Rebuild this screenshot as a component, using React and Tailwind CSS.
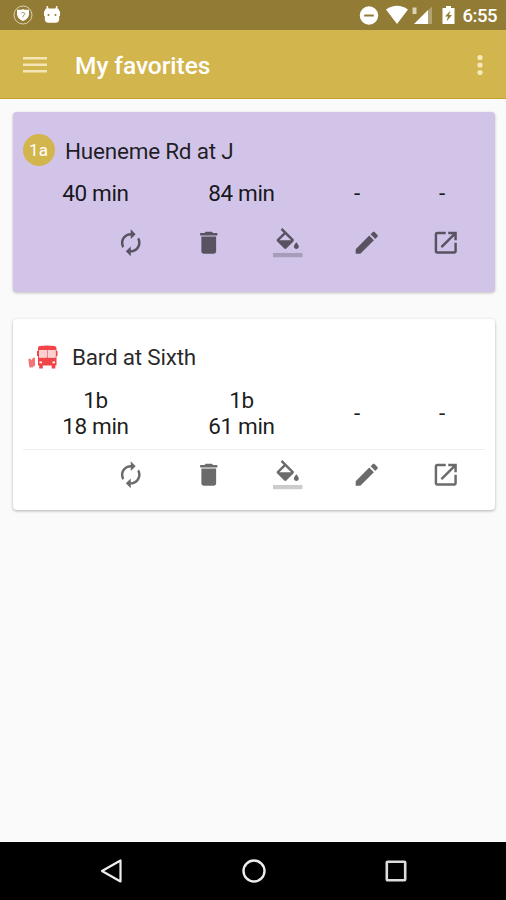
import React from "react";

const actions = [
  {
    name: "refresh",
    path: "M12 6v3l4-4-4-4v3c-4.42 0-8 3.58-8 8 0 1.57.46 3.03 1.24 4.26L6.7 14.8c-.45-.83-.7-1.79-.7-2.8 0-3.31 2.69-6 6-6zm6.76 1.74L17.3 9.2c.44.84.7 1.79.7 2.8 0 3.31-2.69 6-6 6v-3l-4 4 4 4v-3c4.42 0 8-3.58 8-8 0-1.57-.46-3.03-1.24-4.26z",
  },
  {
    name: "delete",
    path: "M6 19c0 1.1.9 2 2 2h8c1.1 0 2-.9 2-2V7H6v12zM19 4h-3.5l-1-1h-5l-1 1H5v2h14V4z",
  },
  {
    name: "color",
    path: "M16.56 8.94L7.62 0 6.21 1.41l2.38 2.38-5.15 5.15c-.59.59-.59 1.54 0 2.12l5.5 5.5c.29.29.68.44 1.06.44s.77-.15 1.06-.44l5.5-5.5c.59-.58.59-1.53 0-2.12zM5.21 10L10 5.21 14.79 10H5.21zM19 11.5s-2 2.17-2 3.5c0 1.1.9 2 2 2s2-.9 2-2c0-1.33-2-3.5-2-3.5z",
    bar: true,
  },
  {
    name: "edit",
    path: "M3 17.25V21h3.75L17.81 9.94l-3.75-3.75L3 17.25zM20.71 7.04c.39-.39.39-1.02 0-1.41l-2.34-2.34c-.39-.39-1.02-.39-1.41 0l-1.83 1.83 3.75 3.75 1.83-1.83z",
  },
  {
    name: "open",
    path: "M19 19H5V5h7V3H5c-1.11 0-2 .9-2 2v14c0 1.1.89 2 2 2h14c1.1 0 2-.9 2-2v-7h-2v7zM14 3v2h3.59l-9.83 9.83 1.41 1.41L19 6.41V10h2V3h-7z",
  },
];

const Actions = () => (
  <div className="flex items-center gap-[49.25px] pl-[93px]">
    {actions.map((action) => (
      <svg
        key={action.name}
        viewBox="0 0 24 24"
        className="size-[29.5px] shrink-0 fill-black/58"
      >
        <path d={action.path} />
        {action.bar && (
          <path d="M0 20.3h24v3.5H0z" className="fill-black/20" />
        )}
      </svg>
    ))}
  </div>
);

const Times = ({ times }) => (
  <div className="grid grid-cols-[146px_146px_85px_85px] items-center text-center text-[22.5px] leading-[26px] tracking-[-0.35px] text-black/90">
    {times.map((time, index) => (
      <div key={index}>
        {time.route && <div>{time.route}</div>}
        <div>{time.value}</div>
      </div>
    ))}
  </div>
);

const BusIcon = () => (
  <svg viewBox="0 0 30 24" className="h-[24px] w-[30px] shrink-0">
    <path
      fill="#f04449"
      fillRule="evenodd"
      d="M11.500 1Q19-.2 26.500 1Q28.500 1.400 28.500 3.200V6h1v5h-1v9.500h-1.200V23.500h-3.600v-3h-8.900v3h-3.600v-3H10V11H9V6h1V3.200Q10 1.400 11.500 1zM11 5v7.500h7.700V5zM19.800 5v7.500h7.700V5zM11.500 16.500v1.800h2.500v-1.800zM24.500 16.500v1.800H27v-1.800z"
    />
    <path d="M11 5h7.700v7.500H11zM19.800 5h7.700v7.500h-7.700z" fill="#fbd0d1" />
    <path
      d="M.3 14.200l2.200-.7 1 2 1.300-2.500 2.200-.6v8.500l-2 .6-.8 1.500-1.200-1.200-.8 1.200-.9-1z"
      fill="#f04449"
      opacity=".75"
    />
  </svg>
);

const StatusBar = () => (
  <div className="flex h-[30px] shrink-0 items-center justify-between bg-[#927c35] pl-[13px] pr-[9px] text-white">
    <div className="flex items-center gap-[10px]">
      <svg viewBox="0 0 20 20" className="size-[20px]">
        <circle cx="10" cy="10" r="9" fill="none" stroke="#d9cfae" strokeWidth="1" />
        <path d="M10 4l1.500.8h4.500v4.900q-1 4.300-6 6.300-5-2-6-6.300V4.800h4.500z" fill="white" />
        <path d="M8.300 8.200q1.700-1.600 3.400 0v1.400L10 11v1.300" fill="none" stroke="#a39568" strokeWidth="1" />
      </svg>
      <svg viewBox="0 0 18 20" className="h-[20px] w-[18px]">
        <path d="M5 4.500L4 1.300M13 4.500l1-3.200" stroke="white" strokeWidth="1.500" />
        <path
          fillRule="evenodd"
          fill="white"
          d="M3 3.600h12q1.200.8 1.200 2.400H17v5h-.8v3q0 3.700-3.700 3.700h-7q-3.700 0-3.700-3.700v-3H1V6h.8q0-1.600 1.200-2.400zM5.500 9a1 1 0 100 2 1 1 0 000-2zM12.500 9a1 1 0 100 2 1 1 0 000-2z"
        />
      </svg>
    </div>
    <div className="flex items-center">
      <svg viewBox="0 0 20 20" className="size-[20px]">
        <circle cx="10" cy="10.500" r="9.200" fill="white" />
        <path d="M5.200 10.500h9.600" stroke="#927c35" strokeWidth="2" />
      </svg>
      <svg viewBox="0 0 22 20" className="ml-[7px] h-[20px] w-[22px]">
        <path d="M0 4.500Q11-3 22 4.500L11 19z" fill="white" />
      </svg>
      <svg viewBox="0 0 22 20" className="ml-[4px] h-[20px] w-[22px]">
        <path d="M16 5.500L20 1.500V19h-4z" fill="white" opacity=".3" />
        <path d="M2 19L16 5v14z" fill="white" />
        <path d="M.5 2.500h4V9h-4z" fill="white" opacity=".65" />
      </svg>
      <svg viewBox="0 0 13 20" className="ml-[8px] h-[20px] w-[13px]">
        <path d="M4 1h5v2h3.500v16H.5V3H4z" fill="white" />
        <path d="M8.500 5.500L3 11.500h3L4.500 16.500 10 10H7z" fill="#927c35" />
      </svg>
      <div className="ml-[8px] pt-[2px] text-[18.5px] font-medium leading-[28px] tracking-[-0.5px]">
        6:55
      </div>
    </div>
  </div>
);

const App = () => {
  return (
    <div className="flex h-[900px] w-[506px] flex-col overflow-hidden bg-[#fafafa] font-['Roboto',sans-serif]">
      <StatusBar />

      <header className="flex h-[69px] shrink-0 items-center border-b border-[#c5a42e] bg-[#d3b54d] pl-[23px] pr-[23px] pt-[2px]">
        <svg viewBox="0 0 24 18" className="h-[18px] w-[24px] fill-[#f3e5b4]">
          <path d="M0 1h24v2.500H0zM0 7.500h24V10H0zM0 14h24v2.500H0z" />
        </svg>
        <h1 className="ml-[28px] pt-[2px] text-[24.5px] font-medium leading-none tracking-[-0.05px] text-white">
          My favorites
        </h1>
        <svg viewBox="0 0 6 22" className="ml-auto h-[22px] w-[6px] fill-[#f5e8bd]">
          <circle cx="3" cy="3.500" r="2.600" />
          <circle cx="3" cy="11" r="2.600" />
          <circle cx="3" cy="18.500" r="2.600" />
        </svg>
      </header>

      <main className="flex flex-1 flex-col gap-[27px] pl-[12.5px] pr-[11.5px] pt-[13px]">
        <section className="h-[180px] rounded-[4px] bg-[#d1c4e8] px-[10px] pt-[22px] shadow-[0_1px_3px_rgba(0,0,0,0.25)]">
          <div className="flex h-[32px] items-center">
            <div className="flex size-[32px] items-center justify-center rounded-full bg-[#d3b54d] pt-[1px] text-[17px] text-white">
              1a
            </div>
            <h2 className="ml-[10.5px] pt-[3px] text-[22.5px] tracking-[-0.22px] text-black/85">
              Hueneme Rd at J
            </h2>
          </div>
          <div className="pt-[14px]">
            <Times
              times={[
                { value: "40 min" },
                { value: "84 min" },
                { value: "-" },
                { value: "-" },
              ]}
            />
          </div>
          <div className="pt-[22px]">
            <Actions />
          </div>
        </section>

        <section className="h-[191px] rounded-[4px] bg-white px-[10px] pt-[22px] shadow-[0_1px_3px_rgba(0,0,0,0.3)]">
          <div className="flex h-[32px] items-center pl-[5.5px]">
            <BusIcon />
            <h2 className="ml-[14px] pt-[2px] text-[22.5px] tracking-[-0.22px] text-black/85">
              Bard at Sixth
            </h2>
          </div>
          <div className="pb-[10px] pt-[14px]">
            <Times
              times={[
                { route: "1b", value: "18 min" },
                { route: "1b", value: "61 min" },
                { value: "-" },
                { value: "-" },
              ]}
            />
          </div>
          <div className="border-t border-[#eeeeee] pt-[10px]">
            <Actions />
          </div>
        </section>
      </main>

      <nav className="flex h-[58px] shrink-0 items-center justify-between bg-black pl-[100px] pr-[98px]">
        <svg viewBox="0 0 24 24" className="size-[24px]">
          <path d="M2 12L20.500 1.500v21z" fill="none" stroke="#eeeeee" strokeWidth="2.200" strokeLinejoin="round" />
        </svg>
        <svg viewBox="0 0 24 24" className="size-[24px]">
          <circle cx="12" cy="12" r="10.500" fill="none" stroke="#eeeeee" strokeWidth="2.400" />
        </svg>
        <svg viewBox="0 0 24 24" className="size-[24px]">
          <rect x="2.800" y="2.800" width="18.400" height="18.400" rx=".8" fill="none" stroke="#dddddd" strokeWidth="2.600" />
        </svg>
      </nav>
    </div>
  );
};

export default App;
